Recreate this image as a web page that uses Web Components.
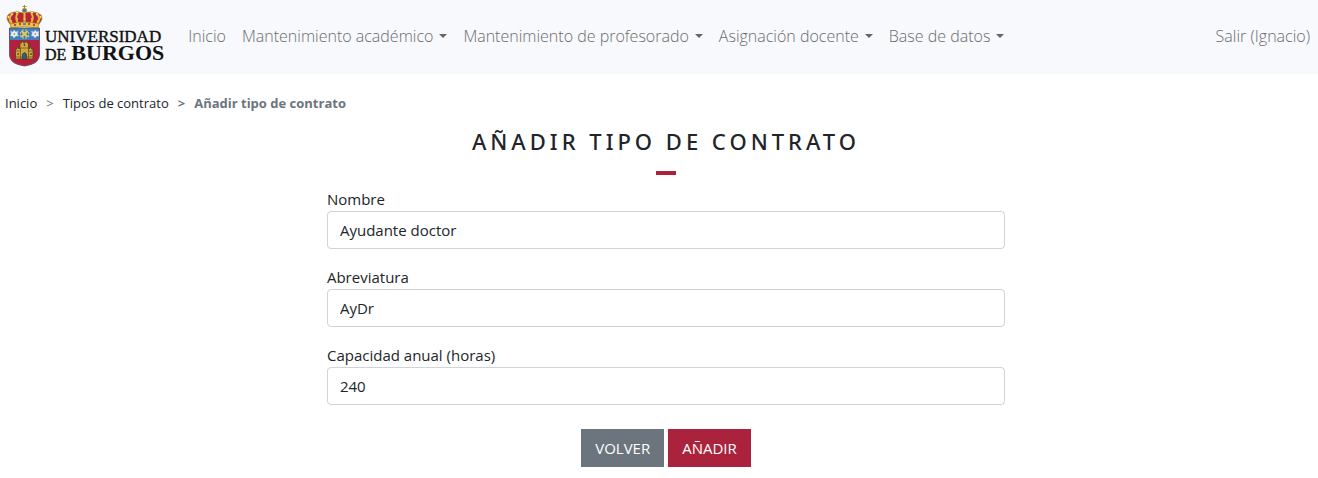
<!DOCTYPE html>
<html lang="es">
<head>
<meta charset="utf-8">
<meta name="viewport" content="width=device-width, initial-scale=1">
<title>Añadir tipo de contrato</title>
<style>
  body {
    margin: 0;
    background: #fff;
    color: #212529;
    font: 15px/24px "Open Sans", "Noto Sans", sans-serif;
  }
  main { padding: 17px 0 11px 14px; }
</style>
</head>
<body>
<ubu-navbar>
  <ubu-logo slot="brand"></ubu-logo>
  <ubu-nav-item>Inicio</ubu-nav-item>
  <ubu-nav-item menu>Mantenimiento académico</ubu-nav-item>
  <ubu-nav-item menu>Mantenimiento de profesorado</ubu-nav-item>
  <ubu-nav-item menu>Asignación docente</ubu-nav-item>
  <ubu-nav-item menu>Base de datos</ubu-nav-item>
  <ubu-nav-item slot="end">Salir (Ignacio)</ubu-nav-item>
</ubu-navbar>
<ubu-breadcrumb></ubu-breadcrumb>
<main>
  <ubu-title>Añadir tipo de contrato</ubu-title>
  <ubu-form>
    <ubu-field label="Nombre" value="Ayudante doctor"></ubu-field>
    <ubu-field label="Abreviatura" value="AyDr"></ubu-field>
    <ubu-field label="Capacidad anual (horas)" value="240"></ubu-field>
    <ubu-button slot="actions">Volver</ubu-button>
    <ubu-button slot="actions" primary>Añadir</ubu-button>
  </ubu-form>
</main>
<script>
class Base extends HTMLElement {
  connectedCallback() {
    if (this.shadowRoot) return;
    this.attachShadow({ mode: "open" }).innerHTML = this.render();
  }
}

customElements.define("ubu-navbar", class extends Base {
  render() {
    return `<style>
      :host { display: block; background: #f8f9fc; }
      nav { display: flex; align-items: center; min-height: 74px; box-sizing: border-box; padding: 0 8px 2px 6px; }
      .items { display: flex; flex: 1; gap: 16px; margin-left: 24px; }
    </style>
    <nav><slot name="brand"></slot><div class="items"><slot></slot></div><slot name="end"></slot></nav>`;
  }
});

customElements.define("ubu-nav-item", class extends Base {
  render() {
    const menu = this.hasAttribute("menu");
    const tag = menu ? 'button type="button" aria-haspopup="true"' : 'a href="#"';
    return `<style>
      :host { display: block; white-space: nowrap; font-size: 16px; }
      a, button { display: flex; align-items: center; gap: 6px; border: 0; padding: 0; background: none;
        color: #6a6b6c; font: inherit; font-weight: 300; text-decoration: none; cursor: pointer; }
      i { border: 4px solid transparent; border-top-color: #646566; border-bottom: 0; }
    </style>
    <${tag}><slot></slot>${menu ? "<i></i>" : ""}</${menu ? "button" : "a"}>`;
  }
});

customElements.define("ubu-logo", class extends Base {
  render() {
    return `<style>
      :host { display: block; }
      a { display: flex; gap: 2px; color: #111; text-decoration: none; font-family: "Liberation Serif", serif; }
      svg { width: 37px; height: 62px; }
      .name { display: flex; flex-direction: column; padding-top: 24px; white-space: nowrap; }
      .top { font-size: 17px; line-height: 16px; -webkit-text-stroke: 0.4px; }
      .bottom { display: flex; align-items: baseline; gap: 5px; font-size: 16px; line-height: 16px; -webkit-text-stroke: 0.4px; }
      b { font-size: 22px; -webkit-text-stroke: 0; }
    </style>
    <a href="#">
      <svg viewBox="0 0 37 62" aria-hidden="true">
        <path d="M5 20Q-1 14 2 10Q7 5 17 8Q29 5 35 10Q38 14 32 20Z" fill="#b8233a" stroke="#ad8320" stroke-width=".7"/>
        <path d="M7 20Q1 14 6 9M13 20Q8 13 12 8M18.500 20V7M24 20Q29 13 25 8M30 20Q36 14 31 9" fill="none" stroke="#e4bd35" stroke-width="2"/>
        <g fill="#fff4a5" stroke="#ad8320" stroke-width=".5">
          <circle cx="2.500" cy="12" r="1.200"/><circle cx="6" cy="9" r="1.200"/><circle cx="11" cy="7.500" r="1.200"/><circle cx="26" cy="7.500" r="1.200"/><circle cx="31" cy="9" r="1.200"/><circle cx="34.500" cy="12" r="1.200"/>
          <circle cx="5" cy="16" r="1"/><circle cx="11" cy="14" r="1"/><circle cx="18.500" cy="14" r="1"/><circle cx="26" cy="14" r="1"/><circle cx="32" cy="16" r="1"/>
        </g>
        <circle cx="18.500" cy="5.500" r="2.300" fill="#3e77b8" stroke="#d5a72a"/>
        <path d="M18.500 0V4M16.500 1.500H20.500" stroke="#b88b25" stroke-width="1"/>
        <path d="M4 19Q18.500 15 33 19L32 23Q18.500 20 5 23Z" fill="#eac340" stroke="#9b751d" stroke-width=".6"/>
        <path d="M8 20H10M13 19H15M22 19H24M27 20H29" stroke="#b8233a" stroke-width="1.500"/><path d="M17 19H20" stroke="#3277b5" stroke-width="1.500"/>
        <path d="M3.500 23H33.500V50Q33 57 25 59.500Q21 60.500 18.500 61Q16 60.500 12 59.500Q4 57 3.500 50Z" fill="#b41f3c"/>
        <path d="M3.500 23H33.500V35H3.500Z" fill="#3f80c2"/>
        <g fill="#e8edf4" stroke="#a9bbd0" stroke-width=".5">
          <path d="M8 25L10 27L12 26L11.500 29L12.500 31L10 31L8 33L6.500 31L4.500 31L5.200 28L4.500 26L7 27Z"/>
          <path d="M29 25L31 27L33 26L32.500 29L33.500 31L31 31L29 33L27.500 31L25.500 31L26.200 28L25.500 26L28 27Z"/>
        </g>
        <circle cx="8.300" cy="29" r="1" fill="#b8a464"/><circle cx="29.300" cy="29" r="1" fill="#b8a464"/>
        <path d="M15.500 26L21.500 32M21.500 26L15.500 32" stroke="#e7cd58" stroke-width="2"/>
        <path d="M16 25H18M14.500 27V29M19 25H21M22.500 27V29M14.500 30V32M22.500 30V32M16 33H18M19 33H21" stroke="#d6bd54"/>
        <path d="M9.500 54V44H11V42H12.500V43.500H14V38H15.500V36.500H17.500V38H19V36.500H21V38H22.500V43.500H24V42H25.500V44H27V54Z" fill="#d2a83d" stroke="#503f25" stroke-width=".8"/>
        <path d="M10 46H14M22 46H27M14.500 43H22.500M10 52H27M14.500 43V54M22.500 43V54" stroke="#6b552c" stroke-width=".8"/>
        <path d="M16.500 54V49Q18.500 46 20.500 49V54Z" fill="#305e83" stroke="#40351f" stroke-width=".7"/>
        <path d="M12 48V50M25 48V50M18.500 39V41" stroke="#3f4d50" stroke-width="1.400"/>
        <path d="M3.500 23H33.500V50Q33 57 25 59.500Q21 60.500 18.500 61Q16 60.500 12 59.500Q4 57 3.500 50Z" fill="none" stroke="#594760" stroke-width=".8"/>
      </svg>
      <span class="name"><span class="top">UNIVERSIDAD</span><span class="bottom"><span>DE</span><b>BURGOS</b></span></span>
    </a>`;
  }
});

customElements.define("ubu-breadcrumb", class extends Base {
  render() {
    return `<style>
      :host { display: block; padding: 19px 5px 0; font-size: 13px; line-height: 20px; }
      ol { display: flex; gap: 9px; margin: 0; padding: 0; list-style: none; }
      li { display: flex; gap: 9px; }
      li + li::before { content: ">"; color: #6c757d; }
      a { color: #212529; text-decoration: none; }
      [aria-current] { color: #6c757d; font-weight: 700; }
    </style>
    <nav aria-label="Ruta"><ol>
      <li><a href="#">Inicio</a></li><li><a href="#">Tipos de contrato</a></li><li aria-current="page">Añadir tipo de contrato</li>
    </ol></nav>`;
  }
});

customElements.define("ubu-title", class extends Base {
  render() {
    return `<style>
      :host { display: block; text-align: center; }
      h1 { margin: 0; font: 500 22px/22px "Noto Sans", "Open Sans", sans-serif; letter-spacing: 4px; text-transform: uppercase; }
      h1::after { content: ""; display: block; width: 20px; height: 4px; margin: 19px auto 0; background: #aa223c; }
    </style>
    <h1><slot></slot></h1>`;
  }
});

customElements.define("ubu-form", class extends Base {
  render() {
    return `<style>
      :host { display: block; width: 52%; margin: 12px auto 0; }
      form { display: grid; gap: 16px; }
      .actions { display: flex; justify-content: center; gap: 4px; margin-top: 8px; }
    </style>
    <form><slot></slot><div class="actions"><slot name="actions"></slot></div></form>`;
  }
});

customElements.define("ubu-field", class extends Base {
  render() {
    return `<style>
      :host { display: block; }
      label { display: block; line-height: 24px; }
      input { display: block; width: 100%; height: 38px; box-sizing: border-box; padding: 6px 12px;
        border: 1px solid #ced4da; border-radius: 4px; background: #fff; color: inherit; font: inherit; }
    </style>
    <label for="control">${this.getAttribute("label")}</label>
    <input id="control" type="text" value="${this.getAttribute("value")}">`;
  }
});

customElements.define("ubu-button", class extends Base {
  render() {
    return `<style>
      :host { display: block; }
      button { height: 38px; padding: 0 14px; border: 0; background: #6c757d; color: #fff; font: inherit;
        text-transform: uppercase; cursor: pointer; }
      :host([primary]) button { background: #aa223c; }
    </style>
    <button type="button"><slot></slot></button>`;
  }
});
</script>
</body>
</html>
